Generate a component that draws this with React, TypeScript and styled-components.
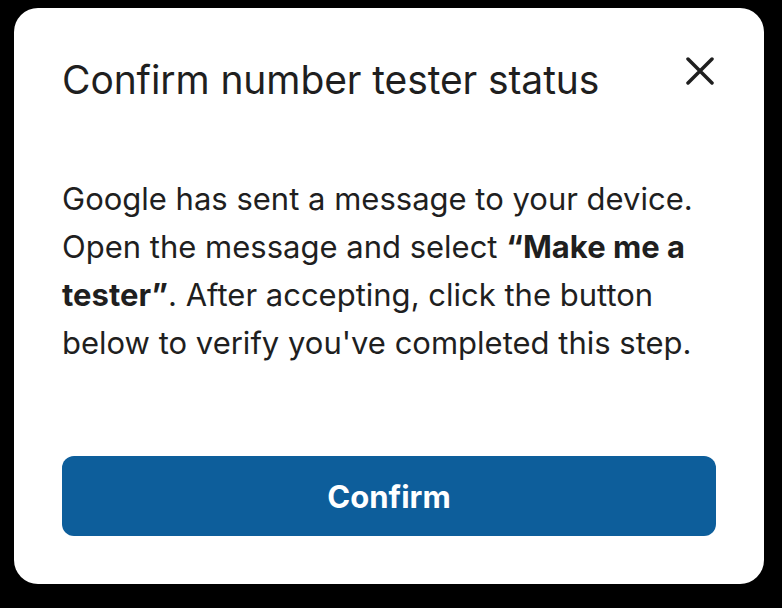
import React from "react";
import styled, { createGlobalStyle } from "styled-components";

const GlobalStyle = createGlobalStyle`
  html, body {
    margin: 0;
    padding: 0;
    background: #000;
  }
  body {
    font-family: Inter, "Noto Sans", sans-serif;
    -webkit-font-smoothing: antialiased;
  }
`;

const Page = styled.div`
  width: 782px;
  height: 608px;
  box-sizing: border-box;
  padding: 8px 18px 24px 14px;
  background: #000;
`;

const Card = styled.div`
  box-sizing: border-box;
  width: 750px;
  height: 576px;
  background: #fff;
  border-radius: 24px;
  padding: 48px;
  display: flex;
  flex-direction: column;
`;

const Header = styled.div`
  display: flex;
  align-items: flex-start;
  justify-content: space-between;
`;

const Title = styled.h2`
  margin: 0;
  font-size: 39px;
  line-height: 48px;
  font-weight: 400;
  color: #1f1f1f;
  letter-spacing: -0.1px;
`;

const CloseButton = styled.button`
  border: none;
  background: none;
  padding: 0;
  width: 28px;
  height: 28px;
  margin-top: 1px;
  margin-right: 2px;
  display: flex;
  align-items: center;
  justify-content: center;
  cursor: pointer;
  color: #1f1f1f;
`;

const Body = styled.p`
  margin: 71px 0 0 0;
  font-size: 31px;
  line-height: 48px;
  color: #1f1f1f;
`;

const Strong = styled.strong`
  font-weight: 700;
`;

const PrimaryButton = styled.button`
  margin-top: auto;
  height: 80px;
  width: 100%;
  border: none;
  border-radius: 12px;
  background: #0d5e9b;
  color: #fff;
  font-family: Inter, "Noto Sans", sans-serif;
  font-size: 31px;
  font-weight: 700;
  cursor: pointer;
`;

export default function App() {
  return (
    <>
      <GlobalStyle />
      <Page>
        <Card>
          <Header>
            <Title>Confirm number tester status</Title>
            <CloseButton aria-label="Close">
              <svg width="28" height="28" viewBox="0 0 28 28" fill="none">
                <path
                  d="M2 2 L26 26 M26 2 L2 26"
                  stroke="currentColor"
                  strokeWidth="3.5"
                  strokeLinecap="round"
                />
              </svg>
            </CloseButton>
          </Header>
          <Body>
            Google has sent a message to your device. Open the message and
            select <Strong>“Make me a tester”</Strong>. After accepting, click
            the button below to verify you've completed this step.
          </Body>
          <PrimaryButton>Confirm</PrimaryButton>
        </Card>
      </Page>
    </>
  );
}
